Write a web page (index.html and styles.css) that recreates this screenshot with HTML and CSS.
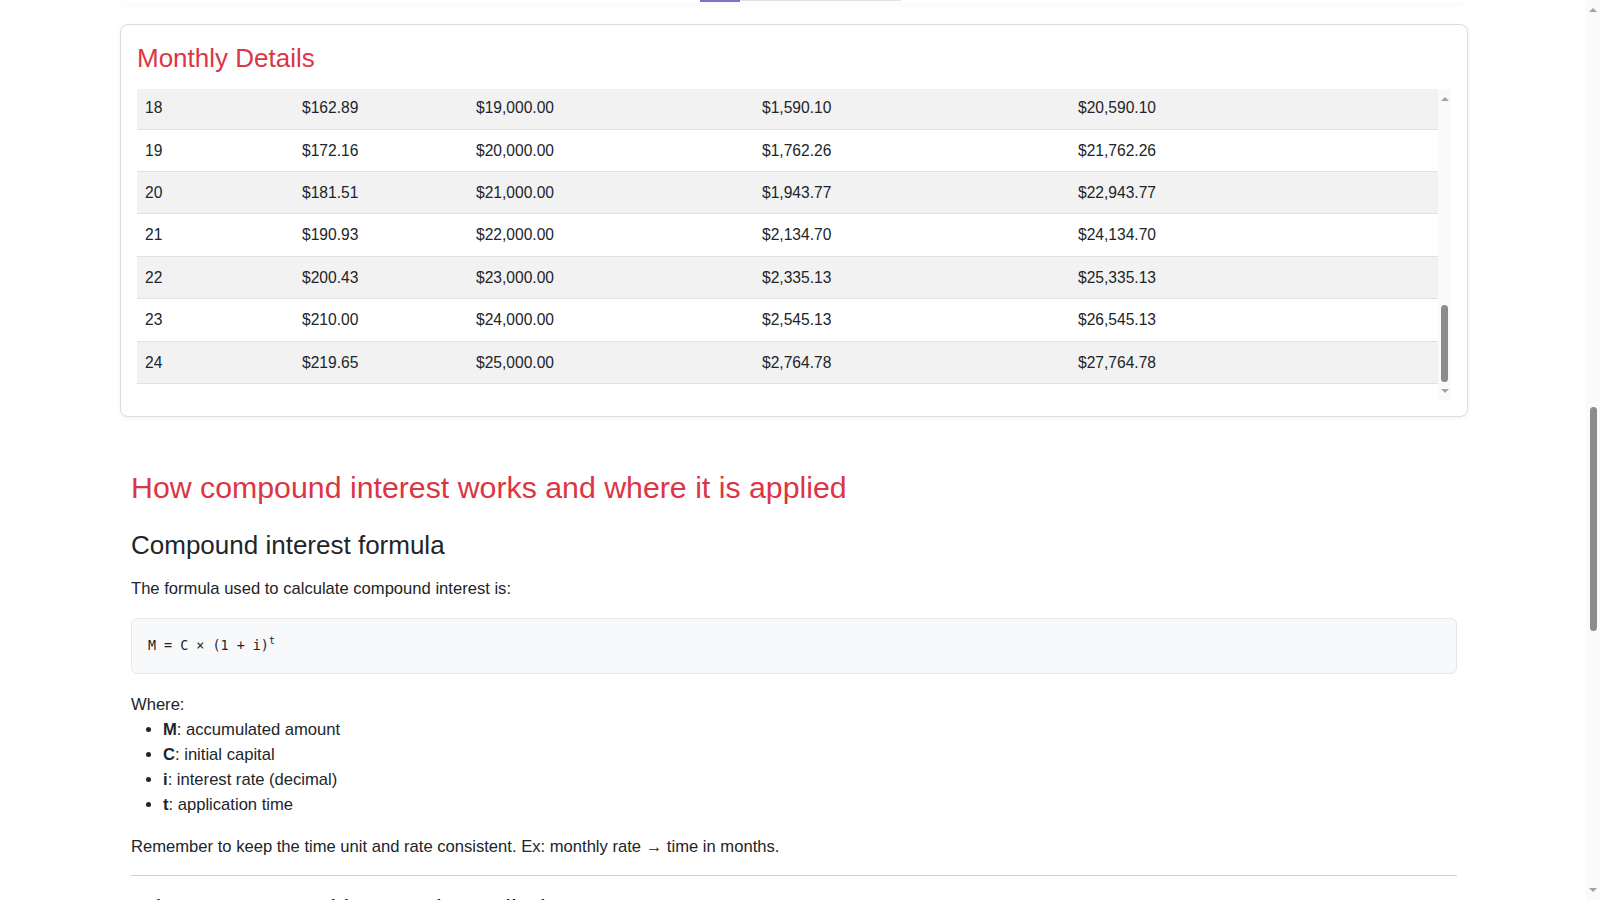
FILE: index.html
```html
<!DOCTYPE html>
<html lang="en">
<head>
<meta charset="utf-8">
<title>Compound Interest Calculator</title>
<link rel="stylesheet" href="styles.css">
</head>
<body>
<main class="page">
  <div class="prev-card">
    <div class="slider"><span class="slider-fill"></span><span class="slider-rest"></span></div>
  </div>

  <section class="card">
    <h4 class="card-title">Monthly Details</h4>
    <div class="scroll-wrap">
      <div class="table-scroll">
        <table class="details">
          <colgroup>
            <col class="c1"><col class="c2"><col class="c3"><col class="c4"><col class="c5">
          </colgroup>
          <thead>
            <tr><th>Month</th><th>Interest</th><th>Total Invested</th><th>Total Interest</th><th>Total Accumulated</th></tr>
          </thead>
          <tbody>
            <tr><td>0</td><td>$8.00</td><td>$1,000.00</td><td>$8.00</td><td>$1,008.00</td></tr>
            <tr><td>1</td><td>$16.01</td><td>$2,000.00</td><td>$24.01</td><td>$2,024.01</td></tr>
            <tr><td>2</td><td>$24.11</td><td>$3,000.00</td><td>$48.12</td><td>$3,048.12</td></tr>
            <tr><td>3</td><td>$32.28</td><td>$4,000.00</td><td>$80.40</td><td>$4,080.40</td></tr>
            <tr><td>4</td><td>$40.51</td><td>$5,000.00</td><td>$120.91</td><td>$5,120.91</td></tr>
            <tr><td>5</td><td>$48.81</td><td>$6,000.00</td><td>$169.72</td><td>$6,169.72</td></tr>
            <tr><td>6</td><td>$57.17</td><td>$7,000.00</td><td>$226.89</td><td>$7,226.89</td></tr>
            <tr><td>7</td><td>$65.60</td><td>$8,000.00</td><td>$292.49</td><td>$8,292.49</td></tr>
            <tr><td>8</td><td>$74.10</td><td>$9,000.00</td><td>$366.59</td><td>$9,366.59</td></tr>
            <tr><td>9</td><td>$82.66</td><td>$10,000.00</td><td>$449.25</td><td>$10,449.25</td></tr>
            <tr><td>10</td><td>$91.30</td><td>$11,000.00</td><td>$540.55</td><td>$11,540.55</td></tr>
            <tr><td>11</td><td>$100.00</td><td>$12,000.00</td><td>$640.55</td><td>$12,640.55</td></tr>
            <tr><td>12</td><td>$108.77</td><td>$13,000.00</td><td>$749.32</td><td>$13,749.32</td></tr>
            <tr><td>13</td><td>$117.61</td><td>$14,000.00</td><td>$866.93</td><td>$14,866.93</td></tr>
            <tr><td>14</td><td>$126.52</td><td>$15,000.00</td><td>$993.45</td><td>$15,993.45</td></tr>
            <tr><td>15</td><td>$135.51</td><td>$16,000.00</td><td>$1,128.96</td><td>$17,128.96</td></tr>
            <tr><td>16</td><td>$144.56</td><td>$17,000.00</td><td>$1,273.52</td><td>$18,273.52</td></tr>
            <tr><td>17</td><td>$153.69</td><td>$18,000.00</td><td>$1,427.21</td><td>$19,427.21</td></tr>
            <tr><td>18</td><td>$162.89</td><td>$19,000.00</td><td>$1,590.10</td><td>$20,590.10</td></tr>
            <tr><td>19</td><td>$172.16</td><td>$20,000.00</td><td>$1,762.26</td><td>$21,762.26</td></tr>
            <tr><td>20</td><td>$181.51</td><td>$21,000.00</td><td>$1,943.77</td><td>$22,943.77</td></tr>
            <tr><td>21</td><td>$190.93</td><td>$22,000.00</td><td>$2,134.70</td><td>$24,134.70</td></tr>
            <tr><td>22</td><td>$200.43</td><td>$23,000.00</td><td>$2,335.13</td><td>$25,335.13</td></tr>
            <tr><td>23</td><td>$210.00</td><td>$24,000.00</td><td>$2,545.13</td><td>$26,545.13</td></tr>
            <tr><td>24</td><td>$219.65</td><td>$25,000.00</td><td>$2,764.78</td><td>$27,764.78</td></tr>
          </tbody>
        </table>
      </div>
      <div class="vbar" aria-hidden="true">
        <span class="vbar-btn"><span class="arrow-up"></span></span>
        <span class="vbar-track"><span class="vbar-thumb"></span></span>
        <span class="vbar-btn vbar-btn-down"><span class="arrow-down"></span></span>
      </div>
    </div>
  </section>

  <article class="article">
    <h2 class="section-title">How compound interest works and where it is applied</h2>
    <h3 class="sub-title">Compound interest formula</h3>
    <p class="text intro">The formula used to calculate compound interest is:</p>
    <pre class="formula">M = C × (1 + i)<sup class="exp">t</sup></pre>
    <p class="text where">Where:</p>
    <ul class="terms">
      <li><strong>M</strong>: accumulated amount</li>
      <li><strong>C</strong>: initial capital</li>
      <li><strong>i</strong>: interest rate (decimal)</li>
      <li><strong>t</strong>: application time</li>
    </ul>
    <p class="text note">Remember to keep the time unit and rate consistent. Ex: monthly rate → time in months.</p>
    <hr class="divider">
    <h3 class="sub-title">Where compound interest is applied</h3>
    <p class="text">Compound interest appears in savings accounts, investment funds, fixed-income securities, loans, financing and credit card debt.</p>
    <p class="text">In investments it works in your favor; in debts it works against you, so paying balances early reduces the total cost.</p>
  </article>
</main>

<div class="page-scrollbar" aria-hidden="true">
  <span class="page-arrow-up"></span>
  <span class="page-thumb"></span>
  <span class="page-arrow-down"></span>
</div>
</body>
</html>
```

FILE: styles.css
```css
body {
  margin: 0 12px 0 0;
  background: #ffffff;
  color: #212529;
  font-family: "Segoe UI", "Liberation Sans", Arial, sans-serif;
  font-size: 16.6px;
  line-height: 25px;
}

.page {
  max-width: 1348px;
  margin: 0 auto;
  padding-bottom: 200px;
}

/* bottom edge of the previous card */
.prev-card {
  height: 2px;
  background: #ffffff;
  border-radius: 0 0 8px 8px;
  box-shadow: 0 2px 8px rgba(0, 0, 0, 0.08);
}

.slider {
  display: flex;
  padding-left: 580px;
}

.slider-fill {
  width: 40px;
  height: 2px;
  background: #7b74c4;
}

.slider-rest {
  width: 161px;
  height: 1px;
  background: #e2e2e2;
}

/* monthly details card */
.card {
  margin-top: 22px;
  border: 1px solid #dcdcdc;
  border-radius: 8px;
  padding: 16px;
  box-shadow: 0 1px 4px rgba(0, 0, 0, 0.06);
  background: #ffffff;
}

.card-title {
  margin: 2px 0 15px;
  color: #dc3545;
  font-size: 26px;
  line-height: 31px;
  font-weight: 400;
}

.scroll-wrap {
  display: flex;
  height: 311px;
}

.table-scroll {
  flex: 1;
  min-width: 0;
  overflow: hidden;
  display: flex;
  flex-direction: column-reverse;
}

.details {
  flex-shrink: 0;
  width: 100%;
  border-collapse: collapse;
  margin-bottom: 16px;
  font-size: 15.6px;
}

.c1 { width: 157px; }
.c2 { width: 174px; }
.c3 { width: 286px; }
.c4 { width: 316px; }

.details th,
.details td {
  padding: 8px;
  text-align: left;
  line-height: 25.4px;
  border-bottom: 1px solid #dee2e6;
}

.details th {
  font-weight: 700;
}

.details tbody tr:nth-child(odd) td {
  background: #f2f2f2;
}

/* table scrollbar */
.vbar {
  width: 13px;
  display: flex;
  flex-direction: column;
  background: #fafafa;
}

.vbar-btn {
  height: 20px;
  display: flex;
  align-items: center;
  justify-content: center;
}

.vbar-btn-down {
  height: 18px;
}

.arrow-up {
  width: 0;
  height: 0;
  border-left: 4px solid transparent;
  border-right: 4px solid transparent;
  border-bottom: 4px solid #a3a3a3;
}

.arrow-down {
  width: 0;
  height: 0;
  border-left: 4px solid transparent;
  border-right: 4px solid transparent;
  border-top: 4px solid #a3a3a3;
}

.vbar-track {
  flex: 1;
  display: flex;
  flex-direction: column;
  justify-content: flex-end;
  align-items: center;
}

.vbar-thumb {
  width: 7px;
  height: 77px;
  border-radius: 4px;
  background: #8c8c8c;
}

/* article */
.article {
  padding: 0 11px;
  margin-top: 52px;
}

.section-title {
  margin: 0 0 21px;
  color: #dc3545;
  font-size: 30.3px;
  line-height: 38px;
  font-weight: 400;
}

.sub-title {
  margin: 0 0 14px;
  color: #212529;
  font-size: 26px;
  line-height: 34px;
  font-weight: 400;
}

.text {
  margin: 0 0 18px;
}

.intro {
  margin-bottom: 17px;
}

.where {
  margin: 0;
}

.note {
  margin-bottom: 16px;
}

.formula {
  margin: 0 0 18px;
  padding: 16px;
  background: #f8f9fa;
  border: 1px solid #e6e8ea;
  border-radius: 6px;
  font-family: "DejaVu Sans Mono", "Liberation Mono", monospace;
  font-size: 13.4px;
  line-height: 22px;
  color: #212529;
}

.exp {
  font-size: 10px;
  line-height: 0;
  vertical-align: 6px;
}

.terms {
  margin: 0 0 17px;
  padding-left: 32px;
}

.divider {
  margin: 0 0 16px;
  border: 0;
  border-top: 1px solid #cfcfcf;
}

/* browser scrollbar drawn over the right edge */
.page-scrollbar {
  position: fixed;
  top: 0;
  right: 0;
  bottom: 0;
  width: 14px;
  background: #fafafa;
}

.page-arrow-up {
  position: absolute;
  top: 8px;
  left: 3px;
  width: 0;
  height: 0;
  border-left: 4px solid transparent;
  border-right: 4px solid transparent;
  border-bottom: 4px solid #a3a3a3;
}

.page-arrow-down {
  position: absolute;
  bottom: 8px;
  left: 3px;
  width: 0;
  height: 0;
  border-left: 4px solid transparent;
  border-right: 4px solid transparent;
  border-top: 4px solid #a3a3a3;
}

.page-thumb {
  position: absolute;
  top: 407px;
  left: 4px;
  width: 7px;
  height: 224px;
  border-radius: 4px;
  background: #8c8c8c;
}
```
